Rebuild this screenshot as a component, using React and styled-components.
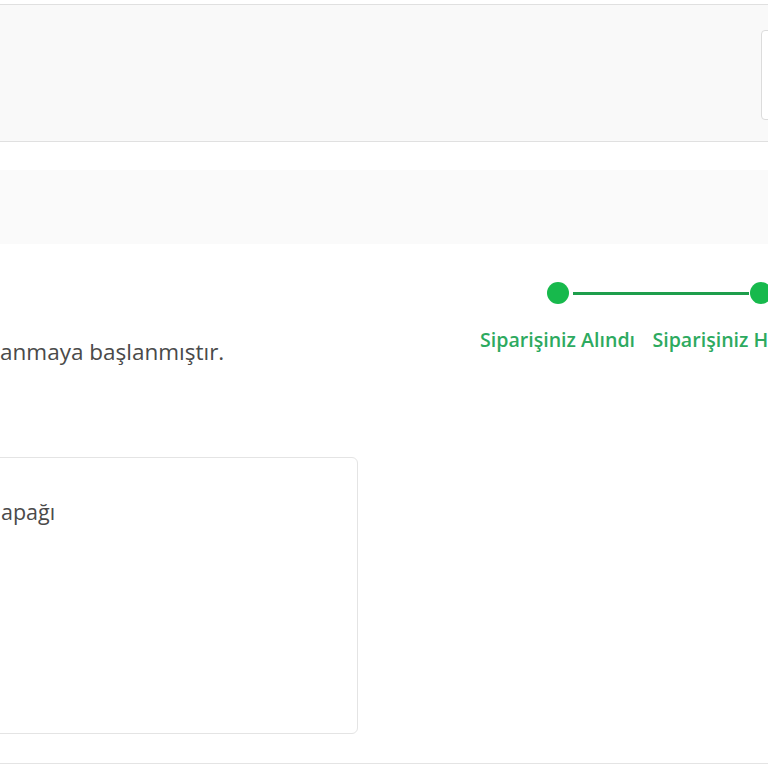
import React from "react";
import styled, { createGlobalStyle } from "styled-components";

const Global = createGlobalStyle`
  html, body { margin: 0; padding: 0; background: #fff; }
  body { font-family: "Open Sans", "Noto Sans", sans-serif; }
`;

const Page = styled.div`
  width: 768px;
  height: 768px;
  overflow: hidden;
  padding-top: 4px;
  box-sizing: border-box;
`;

const TopPanel = styled.div`
  height: 138px;
  box-sizing: border-box;
  background: #f9f9f9;
  border-top: 1px solid #e0e0e0;
  border-bottom: 1px solid #e0e0e0;
  display: flex;
  justify-content: flex-end;
  align-items: flex-start;
  padding-top: 25px;
`;

const SideBox = styled.div`
  width: 24px;
  height: 88px;
  margin-right: -19px;
  background: #fff;
  border: 1px solid #dcdcdc;
  border-radius: 4px;
`;

const Band = styled.div`
  margin-top: 28px;
  height: 74px;
  background: #fafafa;
`;

const InfoRow = styled.div`
  display: flex;
  align-items: flex-start;
  height: 138px;
  padding-top: 38px;
  box-sizing: content-box;
`;

const Message = styled.p`
  margin: 54px 0 0 0;
  font-size: 22.5px;
  line-height: 31px;
  color: #4a4a4a;
  white-space: nowrap;
`;

const Stepper = styled.div`
  display: flex;
  margin-left: auto;
  margin-right: -94px;
`;

const Step = styled.div`
  position: relative;
  width: 203px;
  display: flex;
  flex-direction: column;
  align-items: center;
  &:not(:last-child)::after {
    content: "";
    position: absolute;
    top: 10px;
    left: calc(50% + 15px);
    width: 176px;
    height: 3px;
    background: #1e9e4c;
  }
`;

const Dot = styled.span`
  width: 22px;
  height: 22px;
  border-radius: 50%;
  background: #17b94c;
`;

const Label = styled.span`
  margin-top: 23px;
  font-size: 19.6px;
  line-height: 26px;
  font-weight: 600;
  color: #2daa5f;
  white-space: nowrap;
`;

const Card = styled.div`
  margin: 37px 0 0 -10px;
  width: 368px;
  height: 277px;
  border: 1px solid #e4e4e4;
  border-radius: 6px;
  box-sizing: border-box;
  padding: 39px 0 0 10px;
`;

const CardText = styled.p`
  margin: 0;
  font-size: 21.5px;
  line-height: 30px;
  color: #4a4a4a;
`;

const BottomRule = styled.div`
  margin-top: 29px;
  height: 1px;
  background: #e4e4e4;
`;

const steps = ["Siparişiniz Alındı", "Siparişiniz Hazırlanıyor"];

export default function App() {
  return (
    <>
      <Global />
      <Page>
        <TopPanel>
          <SideBox />
        </TopPanel>
        <Band />
        <InfoRow>
          <Message>anmaya başlanmıştır.</Message>
          <Stepper>
            {steps.map((s) => (
              <Step key={s}>
                <Dot />
                <Label>{s}</Label>
              </Step>
            ))}
          </Stepper>
        </InfoRow>
        <Card>
          <CardText>apağı</CardText>
        </Card>
        <BottomRule />
      </Page>
    </>
  );
}
